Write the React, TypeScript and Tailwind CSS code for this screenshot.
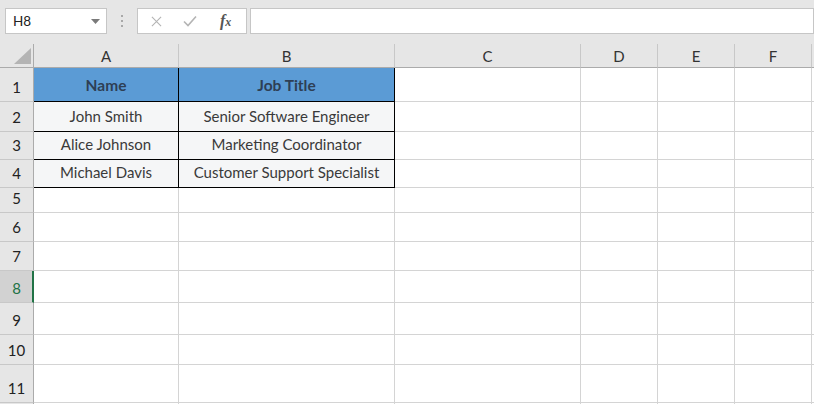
import React from 'react';

const colWidths = [145, 216, 186, 77, 77, 77, 120];
const rowHeights = [34, 30, 28, 28, 25, 29, 29, 32, 32, 30, 38, 24];
const colLetters = ['A', 'B', 'C', 'D', 'E', 'F', ''];

const data: Record<number, [string, string]> = {
  1: ['Name', 'Job Title'],
  2: ['John Smith', 'Senior Software Engineer'],
  3: ['Alice Johnson', 'Marketing Coordinator'],
  4: ['Michael Davis', 'Customer Support Specialist'],
};

const selectedRow = 8;

function FormulaBar() {
  return (
    <div className="flex h-[44px] items-start bg-[#e6e6e6] pt-[8px] pl-[5px]">
      <div className="flex h-[26px] w-[102px] items-center justify-between border border-[#c6c6c6] bg-white pl-[7px] pr-[6px]">
        <span className="text-[13.5px] text-[#222]">H8</span>
        <svg width="9" height="5" viewBox="0 0 9 5">
          <path d="M0 0 H9 L4.5 5 Z" fill="#7a7a7a" />
        </svg>
      </div>
      <div className="flex h-[26px] w-[30px] flex-col items-center justify-center gap-[3px]">
        <span className="h-[2px] w-[2px] bg-[#a8a8a8]" />
        <span className="h-[2px] w-[2px] bg-[#a8a8a8]" />
        <span className="h-[2px] w-[2px] bg-[#a8a8a8]" />
      </div>
      <div className="flex h-[26px] w-[110px] items-center border border-[#c6c6c6] bg-white">
        <svg className="ml-[13px]" width="11" height="11" viewBox="0 0 12 12">
          <path d="M1 1 L11 11 M11 1 L1 11" stroke="#b4b4b4" strokeWidth="1.2" fill="none" />
        </svg>
        <svg className="ml-[21px]" width="14" height="12" viewBox="0 0 14 12">
          <path d="M1 6.5 L5 10.5 L13 1.5" stroke="#b4b4b4" strokeWidth="1.6" fill="none" />
        </svg>
        <span className="ml-[23px] font-['Liberation_Serif',serif] text-[16px] font-bold italic leading-none text-[#555]">
          f<span className="text-[12px]">x</span>
        </span>
      </div>
      <div className="ml-[3px] h-[26px] flex-1 border border-[#c6c6c6] bg-white" />
    </div>
  );
}

function ColumnHeader() {
  return (
    <div className="flex h-[24px] bg-[#e6e6e6]">
      <div className="relative w-[34px] shrink-0 border-r border-b border-[#ababab]">
        <svg className="absolute left-[14px] top-[4px]" width="17" height="16" viewBox="0 0 17 16">
          <path d="M17 0 V16 H0 Z" fill="#b4b4b4" />
        </svg>
      </div>
      {colWidths.map((w, i) => (
        <div
          key={i}
          style={{ width: w }}
          className="flex shrink-0 items-center justify-center border-r border-b border-r-[#c8c8c8] border-b-[#ababab] pt-[1px] text-[15px] text-[#333]"
        >
          {colLetters[i]}
        </div>
      ))}
    </div>
  );
}

function Row({ n, h }: { n: number; h: number }) {
  const selected = n === selectedRow;
  const values = data[n];
  const label = n <= 11 ? n : '';
  return (
    <div className="flex" style={{ height: h }}>
      <div
        className={
          selected
            ? 'flex w-[34px] shrink-0 items-end justify-center border-b border-b-[#c8c8c8] border-r-2 border-r-[#217346] bg-[#d2d2d2] pb-[3px] pl-[1px] text-[15px] text-[#217346]'
            : 'flex w-[34px] shrink-0 items-end justify-center border-r border-b border-r-[#ababab] border-b-[#c8c8c8] bg-[#e6e6e6] pb-[3px] text-[15px] text-[#222]'
        }
      >
        {label}
      </div>
      {colWidths.map((w, i) => {
        if (values && i < 2) {
          const isHead = n === 1;
          return (
            <div
              key={i}
              style={{ width: w }}
              className={
                isHead
                  ? 'flex shrink-0 items-center justify-center border-r border-b border-black bg-[#5b9bd5] pt-[2px] text-[15.5px] font-bold text-[#2e3f55]'
                  : 'flex shrink-0 items-end justify-center border-r border-b border-black bg-[#f5f6f7] pb-[4px] text-[15px] text-[#3a3a3a]'
              }
            >
              {values[i]}
            </div>
          );
        }
        return (
          <div
            key={i}
            style={{ width: w }}
            className="shrink-0 border-r border-b border-[#d4d4d4] bg-white"
          />
        );
      })}
    </div>
  );
}

export default function App() {
  return (
    <div className="h-[404px] w-[814px] overflow-hidden bg-white font-['Lato','Noto_Sans',sans-serif]">
      <FormulaBar />
      <ColumnHeader />
      {rowHeights.map((h, i) => (
        <Row key={i} n={i + 1} h={h} />
      ))}
    </div>
  );
}
